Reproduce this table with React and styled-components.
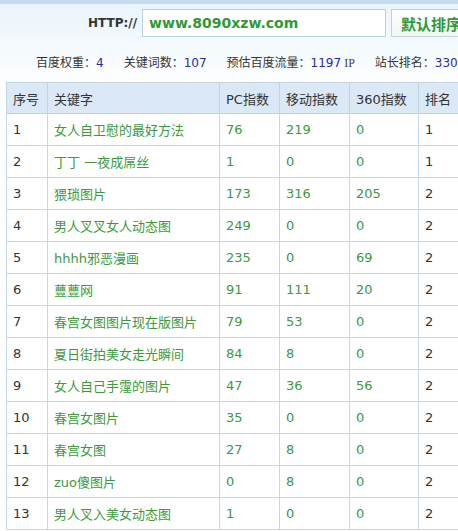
import React from 'react';
import styled, { createGlobalStyle } from 'styled-components';

/********************************************** Data **********************************************/
const rows = [
  ['1', '女人自卫慰的最好方法', '76', '219', '0', '1'],
  ['2', '丁丁 一夜成屌丝', '1', '0', '0', '1'],
  ['3', '猥琐图片', '173', '316', '205', '2'],
  ['4', '男人叉叉女人动态图', '249', '0', '0', '2'],
  ['5', 'hhhh邪恶漫画', '235', '0', '69', '2'],
  ['6', '蘴蘴网', '91', '111', '20', '2'],
  ['7', '春宫女图图片现在版图片', '79', '53', '0', '2'],
  ['8', '夏日街拍美女走光瞬间', '84', '8', '0', '2'],
  ['9', '女人自己手霪的图片', '47', '36', '56', '2'],
  ['10', '春宫女图片', '35', '0', '0', '2'],
  ['11', '春宫女图', '27', '8', '0', '2'],
  ['12', 'zuo傻图片', '0', '8', '0', '2'],
  ['13', '男人叉入美女动态图', '1', '0', '0', '2'],
];

/********************************************** Styles ********************************************/
const GlobalStyle = createGlobalStyle`
  body {
    margin: 0;
    overflow: hidden;
    background: #fff;
    font-family: "DejaVu Sans", "Noto Sans CJK SC", sans-serif;
  }
`;

const Page = styled.div`
  width: 540px;
  border-top: 4px solid #c4dceb;
  background: linear-gradient(to bottom, #e9f4fb 0px, #ffffff 80px);
`;

const SearchBar = styled.div`
  display: flex;
  align-items: center;
  height: 28px;
  padding: 5px 0 0 88px;
`;

const Label = styled.span`
  font-size: 12px;
  font-weight: bold;
  color: #333;
  margin-right: 5px;
`;

const UrlBox = styled.div`
  box-sizing: border-box;
  width: 244px;
  height: 28px;
  border: 1px solid #b9d0de;
  background: #fff;
  display: flex;
  align-items: center;
  padding-left: 6px;
  font-size: 14px;
  font-weight: bold;
  color: #2e9a36;
`;

const SortButton = styled.div`
  box-sizing: border-box;
  margin-left: 5px;
  height: 28px;
  width: 100px;
  border: 1px solid #c3d3de;
  background: linear-gradient(to bottom, #ffffff, #f2f7f2);
  display: flex;
  align-items: center;
  padding-left: 9px;
  font-family: "Noto Sans CJK SC", sans-serif;
  font-size: 15px;
  font-weight: bold;
  color: #2e9a36;
`;

const Stats = styled.div`
  display: flex;
  gap: 20px;
  align-items: center;
  padding: 4px 0 0 36px;
  height: 41px;
  font-size: 12px;
  color: #333;
  white-space: nowrap;
`;

const Stat = styled.span`
  font-family: "Noto Sans CJK SC", sans-serif;
`;

const Num = styled.span`
  font-family: "DejaVu Sans", sans-serif;
  color: #2a2aa4;
`;

const Unit = styled.span`
  font-family: "Liberation Serif", serif;
  color: #444;
  margin-left: 3px;
`;

const Table = styled.table`
  margin-left: 6px;
  border-collapse: collapse;
  table-layout: fixed;
  width: 520px;
  font-size: 13px;
`;

const Th = styled.th`
  height: 30px;
  padding: 0 0 0 6px;
  border: 1px solid #bed3e3;
  background: #dbe9f6;
  color: #333;
  font-weight: normal;
  text-align: left;
  font-family: "DejaVu Sans", "Noto Sans CJK SC", sans-serif;
`;

const Td = styled.td`
  height: 31px;
  padding: 0 0 0 6px;
  border: 1px solid #c8d9e6;
  color: ${p => (p.$green ? '#3c9a3c' : '#333')};
  white-space: nowrap;
  overflow: hidden;
`;

/********************************************* Component ******************************************/
const App = () => {
  return (
    <Page>
      <GlobalStyle />
      <SearchBar>
        <Label>HTTP://</Label>
        <UrlBox>www.8090xzw.com</UrlBox>
        <SortButton>默认排序</SortButton>
      </SearchBar>
      <Stats>
        <Stat>百度权重：<Num>4</Num></Stat>
        <Stat>关键词数：<Num>107</Num></Stat>
        <Stat>预估百度流量：<Num>1197</Num><Unit>IP</Unit></Stat>
        <Stat>站长排名：<Num>3305</Num></Stat>
      </Stats>
      <Table>
        <colgroup>
          <col style={{ width: 41 }} />
          <col style={{ width: 172 }} />
          <col style={{ width: 60 }} />
          <col style={{ width: 70 }} />
          <col style={{ width: 69 }} />
          <col style={{ width: 108 }} />
        </colgroup>
        <thead>
          <tr>
            <Th>序号</Th>
            <Th>关键字</Th>
            <Th>PC指数</Th>
            <Th>移动指数</Th>
            <Th>360指数</Th>
            <Th>排名</Th>
          </tr>
        </thead>
        <tbody>
          {rows.map(r => (
            <tr key={r[0]}>
              <Td>{r[0]}</Td>
              <Td $green>{r[1]}</Td>
              <Td $green>{r[2]}</Td>
              <Td $green>{r[3]}</Td>
              <Td $green>{r[4]}</Td>
              <Td>{r[5]}</Td>
            </tr>
          ))}
        </tbody>
      </Table>
    </Page>
  );
};

export default App;
